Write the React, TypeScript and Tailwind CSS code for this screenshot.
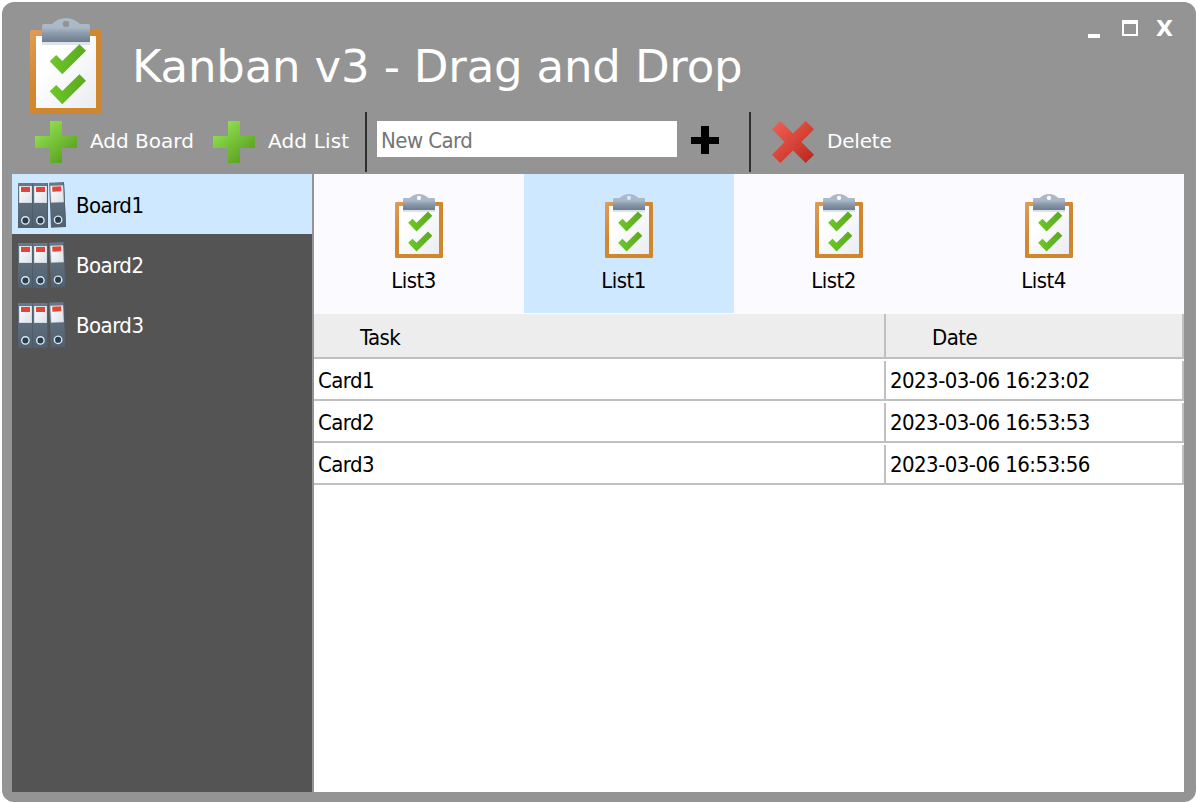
import React from "react";

const condensed =
  "font-['DejaVu_Sans_Condensed','DejaVu_Sans',sans-serif] [font-stretch:condensed] text-[22px] leading-[28px] tracking-[-0.55px]";

function Clipboard({ id, className }: { id: string; className: string }) {
  return (
    <svg viewBox="0 0 72 96" className={className}>
      <defs>
        <linearGradient id={`${id}-wood`} x1="0" y1="0" x2="0.6" y2="0.6">
          <stop offset="0" stopColor="#de9d5a" />
          <stop offset="0.6" stopColor="#d18830" />
          <stop offset="1" stopColor="#d0862d" />
        </linearGradient>
        <linearGradient id={`${id}-paper`} x1="0" y1="0" x2="1" y2="1">
          <stop offset="0.3" stopColor="#ffffff" />
          <stop offset="1" stopColor="#e9ecf1" />
        </linearGradient>
        <linearGradient id={`${id}-clip`} x1="0" y1="0" x2="0" y2="1">
          <stop offset="0" stopColor="#adbac9" />
          <stop offset="0.4" stopColor="#a9b7c6" />
          <stop offset="0.65" stopColor="#8b9aaa" />
          <stop offset="1" stopColor="#6d7c8e" />
        </linearGradient>
        <linearGradient id={`${id}-check`} x1="0" y1="0" x2="1" y2="0">
          <stop offset="0" stopColor="#6cc926" />
          <stop offset="1" stopColor="#5ba81f" />
        </linearGradient>
      </defs>
      <path
        d="M2 12H70Q72 12 72 14V94Q72 96 70 96H2Q0 96 0 94V14Q0 12 2 12Z"
        fill={`url(#${id}-wood)`}
      />
      <path d="M6 18H66V90H6Z" fill={`url(#${id}-paper)`} />
      <path d="M12 24H60V27H12Z" fill="#dce3ea" />
      <path
        fillRule="evenodd"
        d="M12 24V8Q12 6 14 6H22Q28 0 36 0T50 6H58Q60 6 60 8V24ZM39.2 6A3.2 3.2 0 1 0 32.8 6A3.2 3.2 0 1 0 39.2 6Z"
        fill={`url(#${id}-clip)`}
      />
      <path
        d="M19.7 43.3L26.2 37L32.3 43L49.4 26.2L56 32.7L32.3 56.2Z"
        fill={`url(#${id}-check)`}
      />
      <path
        d="M19.7 73.3L26.2 67L32.3 73L49.4 56.2L56 62.7L32.3 86.2Z"
        fill={`url(#${id}-check)`}
      />
    </svg>
  );
}

function GreenPlus({ id }: { id: string }) {
  return (
    <svg viewBox="0 0 42 42" className="h-[42px] w-[42px] shrink-0">
      <defs>
        <linearGradient id={id} x1="0.15" y1="0.1" x2="0.8" y2="0.85">
          <stop offset="0" stopColor="#93e151" />
          <stop offset="1" stopColor="#5ba322" />
        </linearGradient>
      </defs>
      <path d="M15 0H27V15H42V27H27V42H15V27H0V15H15Z" fill={`url(#${id})`} />
    </svg>
  );
}

function RedCross() {
  return (
    <svg viewBox="0 0 42 42" className="h-[42px] w-[42px] shrink-0">
      <defs>
        <linearGradient id="cross" x1="0" y1="0" x2="1" y2="1">
          <stop offset="0.08" stopColor="#f05b4f" />
          <stop offset="0.5" stopColor="#d94439" />
          <stop offset="0.95" stopColor="#b9281e" />
        </linearGradient>
      </defs>
      <path
        d="M8.3 0L21 12.6L33.7 0L42 8.3L29.4 21L42 33.7L33.7 42L21 29.4L8.3 42L0 33.7L12.6 21L0 8.3Z"
        fill="url(#cross)"
      />
    </svg>
  );
}

function Binder() {
  return (
    <g>
      <path d="M0 0H15V45H0Z" fill="url(#binder)" />
      <path d="M14.5 0H15V45H14.5Z" fill="#44525f" />
      <path d="M1 3H14V20H1Z" fill="#cfd8e0" />
      <path d="M1.8 3.8H13.2V19.2H1.8Z" fill="url(#label)" />
      <path d="M3 4H12V9H3Z" fill="#df4539" />
      <circle cx="7.4" cy="37.4" r="3.7" fill="#2f3b46" stroke="#d3ecf9" strokeWidth="1.4" />
    </g>
  );
}

function Binders() {
  return (
    <svg viewBox="0 0 48 46" className="h-[46px] w-[48px] shrink-0">
      <defs>
        <linearGradient id="binder" x1="0" y1="0" x2="0" y2="1">
          <stop offset="0" stopColor="#687888" />
          <stop offset="1" stopColor="#50606e" />
        </linearGradient>
        <linearGradient id="label" x1="0" y1="0" x2="1" y2="1">
          <stop offset="0" stopColor="#fbfcfd" />
          <stop offset="1" stopColor="#dfe4ea" />
        </linearGradient>
      </defs>
      <g transform="translate(0 1)">
        <Binder />
      </g>
      <g transform="translate(15 1)">
        <Binder />
      </g>
      <g transform="translate(31 0.8) rotate(-2.6)">
        <Binder />
      </g>
    </svg>
  );
}

const boards = ["Board1", "Board2", "Board3"];
const lists = ["List3", "List1", "List2", "List4"];
const cards = [
  { task: "Card1", date: "2023-03-06 16:23:02" },
  { task: "Card2", date: "2023-03-06 16:53:53" },
  { task: "Card3", date: "2023-03-06 16:53:56" },
];

export default function App() {
  return (
    <div className="h-[803px] w-[1197px] overflow-hidden bg-white pt-[2px] pl-[2px] font-['DejaVu_Sans',sans-serif]">
      <div className="flex h-[800px] w-[1194px] flex-col rounded-[12px] bg-[#949494] px-[10px] pb-[10px]">
        <header className="flex h-[110px] shrink-0 items-start">
          <Clipboard id="logo" className="mt-[16px] ml-[18px] h-[96px] w-[72px] shrink-0" />
          <h1 className="mt-[35px] ml-[30px] text-[45px] leading-[60px] tracking-[-0.17px] whitespace-nowrap text-white">
            Kanban v3 - Drag and Drop
          </h1>
          <div className="mt-[18px] mr-[14px] ml-auto flex h-[16px] items-start">
            <div className="mt-[14px] mr-[22px] h-[4px] w-[12px] bg-white" />
            <div className="mr-[18px] h-[16px] w-[16px] border-2 border-t-4 border-white" />
            <div className="w-[16px] pt-[1px] text-center text-[22px] leading-[16px] font-bold text-white">
              X
            </div>
          </div>
        </header>

        <div className="flex h-[62px] shrink-0 items-start text-[20px] text-white">
          <button className="mt-[9px] ml-[23px] flex w-[178px] items-center gap-[13px]">
            <GreenPlus id="plus-board" />
            <span className="pb-[3px] leading-[28px] whitespace-nowrap">Add Board</span>
          </button>
          <button className="mt-[9px] flex w-[152px] items-center gap-[13px]">
            <GreenPlus id="plus-list" />
            <span className="pb-[3px] leading-[28px] tracking-[0.15px] whitespace-nowrap">
              Add List
            </span>
          </button>
          <div className="h-[60px] w-[2px] bg-[#2e2e2e]" />
          <input
            placeholder="New Card"
            className={`${condensed} mt-[9px] ml-[10px] h-[36px] w-[300px] bg-white px-[4px] pt-[2px] text-black placeholder:text-[#757575] placeholder:opacity-100`}
          />
          <svg viewBox="0 0 28 28" className="mt-[14px] ml-[14px] h-[28px] w-[28px]">
            <path d="M10 0H18V11H28V18H18V28H10V18H0V11H10Z" fill="#000" />
          </svg>
          <div className="ml-[30px] h-[60px] w-[2px] bg-[#2e2e2e]" />
          <button className="mt-[9px] ml-[21px] flex items-center gap-[13px]">
            <RedCross />
            <span className="pb-[3px] leading-[28px] tracking-[-0.2px]">Delete</span>
          </button>
        </div>

        <div className="flex h-[618px] shrink-0">
          <aside className="w-[302px] shrink-0 border-r-2 border-[#949494] bg-[#545454]">
            {boards.map((b, i) => (
              <div
                key={b}
                className={`flex h-[60px] items-start gap-[10px] pt-[8px] pl-[6px] ${
                  i === 0 ? "bg-[#cde8ff] text-black" : "text-white"
                }`}
              >
                <Binders />
                <span className={`${condensed} mt-[10px]`}>{b}</span>
              </div>
            ))}
          </aside>

          <main className="w-[870px] bg-white">
            <div className="flex h-[140px] bg-[#fbfaff]">
              {lists.map((l) => (
                <div
                  key={l}
                  className={`flex h-[139px] w-[210px] flex-col items-center pt-[20px] ${
                    l === "List1" ? "bg-[#cde8ff]" : ""
                  }`}
                >
                  <Clipboard id={l} className="h-[64px] w-[48px]" />
                  <span className={`${condensed} mt-[9px] pr-[11px] text-black`}>{l}</span>
                </div>
              ))}
            </div>

            <div className="flex h-[45px] border-b-2 border-[#c0c0c0] bg-[#ededed] text-black">
              <div className="w-[572px] border-r-2 border-[#c0c0c0] pt-[10px] pl-[46px]">
                <span className={`${condensed} block`}>Task</span>
              </div>
              <div className="w-[298px] border-r-2 border-[#c0c0c0] pt-[10px] pl-[46px]">
                <span className={`${condensed} block`}>Date</span>
              </div>
            </div>

            {cards.map((c) => (
              <div key={c.task} className="flex h-[42px] border-b-2 border-[#c0c0c0] pt-[2px] text-black">
                <div className="w-[572px] border-r-2 border-[#c0c0c0] pt-[6px] pl-[4px]">
                  <span className={`${condensed} block`}>{c.task}</span>
                </div>
                <div className="w-[298px] border-r-2 border-[#c0c0c0] pt-[6px] pl-[4px]">
                  <span className={`${condensed} block`}>{c.date}</span>
                </div>
              </div>
            ))}
          </main>
        </div>
      </div>
    </div>
  );
}
